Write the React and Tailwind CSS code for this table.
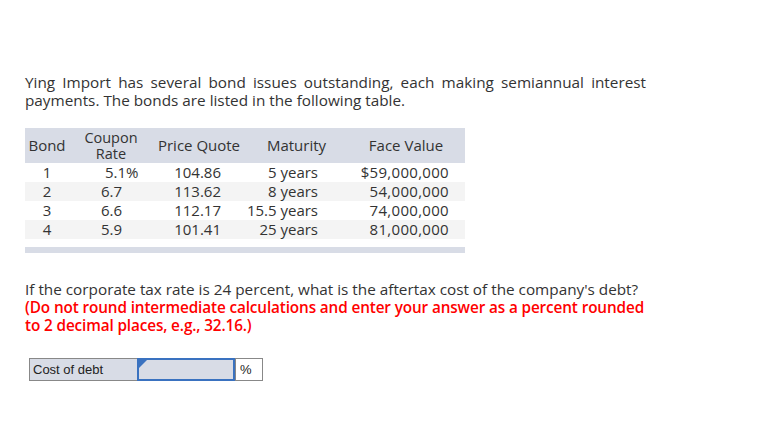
import React from 'react'

const rows = [
  { bond: '1', rate: '5.1%', ratePad: 'pl-[36px]', price: '104.86', maturity: '5 years', face: '$59,000,000' },
  { bond: '2', rate: '6.7', ratePad: 'pl-[32px]', price: '113.62', maturity: '8 years', face: '54,000,000' },
  { bond: '3', rate: '6.6', ratePad: 'pl-[32px]', price: '112.17', maturity: '15.5 years', face: '74,000,000' },
  { bond: '4', rate: '5.9', ratePad: 'pl-[32px]', price: '101.41', maturity: '25 years', face: '81,000,000' },
]

const cols = 'grid grid-cols-[44px_84px_92px_85px_135px]'

export default function App() {
  return (
    <div
      className="w-[771px] h-[442px] bg-white text-[#333] overflow-hidden"
      style={{ fontFamily: '"Open Sans", Lato, sans-serif' }}
    >
      <div className="pt-[73px] pl-[25px] w-[646px]">
        {/* Intro */}
        <p className="text-[15.3px] leading-[18px] text-justify">
          Ying Import has several bond issues outstanding, each making semiannual interest payments. The bonds are listed in the following table.
        </p>

        {/* Bond table */}
        <div className="mt-[19px] w-[440px] text-[15px]">
          <div className={`${cols} h-[35px] bg-[#d8dce6] items-center leading-[17px]`}>
            <div className="text-center">Bond</div>
            <div className="text-center text-[14.5px] leading-[16px]">Coupon<br />Rate</div>
            <div className="text-center whitespace-nowrap">Price Quote</div>
            <div className="text-center pl-[18px]">Maturity</div>
            <div className="text-center pl-[17px]">Face Value</div>
          </div>
          {rows.map((r, i) => (
            <div
              key={r.bond}
              className={`${cols} h-[19px] items-center leading-[19px] ${i % 2 ? 'bg-[#f4f4f4]' : 'bg-white'}`}
            >
              <div className="text-center">{r.bond}</div>
              <div className={r.ratePad}>{r.rate}</div>
              <div className="text-right pr-[24px]">{r.price}</div>
              <div className="text-right pr-[12px] whitespace-nowrap">{r.maturity}</div>
              <div className="text-right pr-[16px] tracking-[0.3px]">{r.face}</div>
            </div>
          ))}
          <div className="mt-[8px] h-[6px] bg-[#d8dce6]" />
        </div>

        {/* Question */}
        <div className="mt-[27px] text-[15.3px] leading-[18px] w-[640px]">
          <p className="whitespace-nowrap">
            If the corporate tax rate is 24 percent, what is the aftertax cost of the company's debt?
          </p>
          <p className="font-semibold text-[#f00] tracking-[-0.12px]">
            <span className="whitespace-nowrap">(Do not round intermediate calculations and enter your answer as a percent rounded</span>
            <br />
            to 2 decimal places, e.g., 32.16.)
          </p>
        </div>

        {/* Answer row */}
        <div
          className="mt-[24px] ml-[4px] flex h-[23px] text-[13px] text-[#222]"
          style={{ fontFamily: '"Liberation Sans", Arial, sans-serif' }}
        >
          <div className="w-[109px] bg-[#d8dce6] border border-[#888] flex items-center pl-[3px]">Cost of debt</div>
          <div className="relative w-[98px] bg-[#d8dce6] border-2 border-[#3a72c0] -ml-px">
            <div className="absolute left-0 top-0 w-0 h-0 border-t-[8px] border-t-[#3a72c0] border-r-[8px] border-r-transparent" />
          </div>
          <div className="w-[28px] bg-white border border-[#888] flex items-center pl-[4px]">%</div>
        </div>
      </div>
    </div>
  )
}
